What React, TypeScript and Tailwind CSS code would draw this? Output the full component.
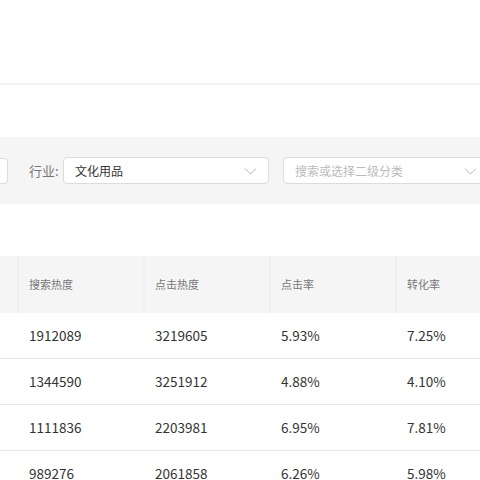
import React from "react";

const font = { fontFamily: '"Noto Sans CJK SC", "Noto Sans", sans-serif' };

function Chevron() {
  return (
    <svg width="13" height="8" viewBox="0 0 13 8" fill="none">
      <path d="M1 1.5 L6.5 7 L12 1.5" stroke="#b5b5b5" strokeWidth="1" />
    </svg>
  );
}

const rows = [
  ["1912089", "3219605", "5.93%", "7.25%"],
  ["1344590", "3251912", "4.88%", "4.10%"],
  ["1111836", "2203981", "6.95%", "7.81%"],
  ["989276", "2061858", "6.26%", "5.98%"],
];

export default function App() {
  return (
    <div className="w-[480px] h-[480px] overflow-hidden bg-white" style={font}>
      <div className="h-[83px]" />
      <div className="h-[2px] bg-[#f2f2f2]" />
      <div className="h-[52px]" />
      <div className="h-[67px] bg-[#f5f5f5] flex items-center">
        <div className="w-[8px] h-[26px] bg-white border border-l-0 border-[#dcdcdc] rounded-r-sm shrink-0" />
        <div className="ml-[21px] text-[13px] text-[#777] w-[34px] shrink-0">行业:</div>
        <div className="w-[206px] h-[27px] bg-white border border-[#dcdcdc] rounded-sm flex items-center justify-between pl-[11px] pr-[11px] shrink-0">
          <span className="text-[12px] text-[#333]">文化用品</span>
          <Chevron />
        </div>
        <div className="ml-[14px] w-[206px] h-[27px] bg-white border border-[#dcdcdc] rounded-sm flex items-center justify-between pl-[11px] pr-[11px] shrink-0">
          <span className="text-[12px] text-[#bbb]">搜索或选择二级分类</span>
          <Chevron />
        </div>
      </div>
      <div className="h-[52px]" />
      <div className="flex h-[57px] bg-[#f5f5f5]">
        <div className="w-[19px] shrink-0 border-r-2 border-[#efefef]" />
        {["搜索热度", "点击热度", "点击率", "转化率"].map((h) => (
          <div key={h} className="w-[126px] shrink-0 border-r-2 border-[#efefef] flex items-center pl-[10px] text-[11px] text-[#777]">
            {h}
          </div>
        ))}
      </div>
      {rows.map((r, i) => (
        <div key={i} className="flex h-[46px] border-b border-[#e8e8e8]">
          <div className="w-[19px] shrink-0" />
          {r.map((c, j) => (
            <div key={j} className="w-[126px] shrink-0 flex items-center pl-[10px] text-[13.5px] text-[#333]">
              {c}
            </div>
          ))}
        </div>
      ))}
    </div>
  );
}
